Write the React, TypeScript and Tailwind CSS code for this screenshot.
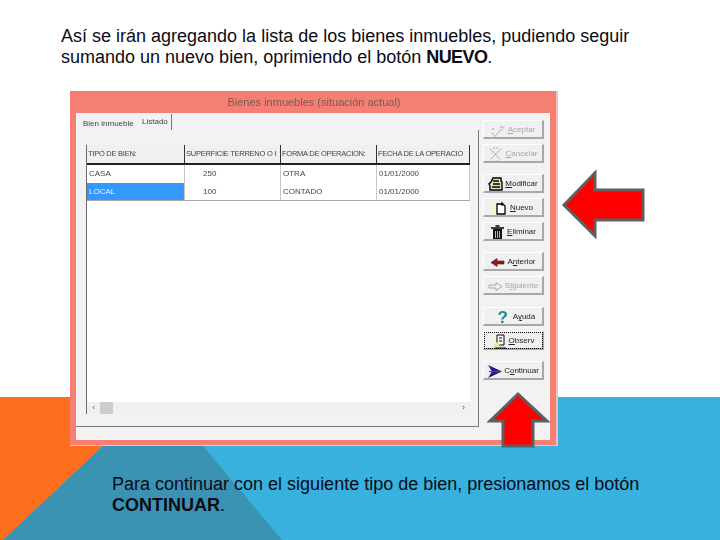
const F = "font-['Liberation_Sans',Arial,sans-serif]";

type Btn = { label: string; u: number; icon: React.ReactNode; off?: boolean; mt?: string; dotted?: boolean };

function Ic({ children }: { children: React.ReactNode }) {
  return <svg width="15" height="15" viewBox="0 0 15 15" className="shrink-0">{children}</svg>;
}

const buttons: Btn[] = [
  { label: "Aceptar", u: 0, off: true, icon: <Ic><path d="M1 10l3 3 2-2 8-8M9 4h2M1 6h2" fill="none" stroke="#b5b5b5" strokeWidth="1.3" strokeDasharray="2 1" /></Ic> },
  { label: "Cancelar", u: 0, off: true, icon: <Ic><path d="M2 2l11 11M13 2L2 13M5 1h5M5 14h5" fill="none" stroke="#b5b5b5" strokeWidth="1.2" strokeDasharray="2 1" /></Ic> },
  { label: "Modificar", u: 0, mt: "mt-[6px]", icon: <Ic><path d="M5 1h8v3l1 1v8H2V9L1 7l2-2z" fill="#e6e2b8" stroke="#000" strokeWidth="1.4" /><path d="M5 4h6M5 7h7M4 10h8" stroke="#000" strokeWidth="1.3" /></Ic> },
  { label: "Nuevo", u: 0, icon: <Ic><path d="M0 3h6v9H0z" fill="#f9f6b4" /><path d="M4 3h4l1 1V2l3 3v8H4z" fill="#fff" stroke="#000" strokeWidth="1.3" /></Ic> },
  { label: "Eliminar", u: 0, icon: <Ic><path d="M1 3h13M5.500 1h4" stroke="#000" strokeWidth="1.4" /><path d="M3 4h9v10H3z" fill="#111" /><path d="M5.500 6v7M7.500 6v7M9.500 6v7" stroke="#ddd" strokeWidth=".8" /></Ic> },
  { label: "Anterior", u: 1, mt: "mt-[6px]", icon: <Ic><path d="M1 7.500 7 3.500v2.500h7v3H7v2.500z" fill="#9c1420" stroke="#501018" strokeWidth=".6" /></Ic> },
  { label: "Siguiente", u: 1, off: true, icon: <Ic><path d="M14 7.500 8 3.500v2.500H1v3h7v2.500z" fill="none" stroke="#aaa" strokeWidth="1" /></Ic> },
  { label: "Ayuda", u: 1, mt: "mt-[7px]", icon: <span className="w-[20px] pl-[4px] text-center text-[17px] leading-[15px] font-bold text-[#178a9c]">?</span> },
  { label: "Observ", u: 0, dotted: true, icon: <Ic><path d="M5 1h7v10H5z" fill="#fff" stroke="#000" strokeWidth="1" /><path d="M0 13l5-5 3 2-2 3z" fill="#ecec80" /><path d="M7 4h3M7 7h3M3 14h11" stroke="#000" /></Ic> },
  { label: "Continuar", u: 1, mt: "mt-[6px]", icon: <Ic><path d="M1 1l14 6.500L1 14l4-6.500z" fill="#1a1a9c" /><path d="M2 7.500h12" stroke="#c02040" strokeWidth="1.400" /></Ic> },
];

function Button({ b }: { b: Btn }) {
  return (
    <div className={`${b.mt ?? ""} h-[19px] w-[61px] shrink-0 bg-[#f0f0f0] border-t border-l border-t-white border-l-white border-r-2 border-b-2 border-r-[#a8a8a8] border-b-[#a8a8a8] flex items-center justify-center gap-[2px] px-[1px] pt-[2px] text-[8px] leading-none whitespace-nowrap ${b.off ? "text-[#a6a6a6]" : "text-[#222]"} ${b.dotted ? "outline-1 outline-dotted outline-black -outline-offset-2" : ""}`}>
      {b.icon}
      <span>
        {b.label.slice(0, b.u)}
        <span className="underline">{b.label[b.u]}</span>
        {b.label.slice(b.u + 1)}
      </span>
    </div>
  );
}

const cols = ["w-[98px]", "w-[96px]", "w-[96px]", "flex-1"];
const header = ["TIPO DE BIEN:", "SUPERFICIE TERRENO O I", "FORMA DE OPERACION:", "FECHA DE LA OPERACIO"];
const rows = [
  ["CASA", "250", "OTRA", "01/01/2000"],
  ["LOCAL", "100", "CONTADO", "01/01/2000"],
];

function Grid() {
  return (
    <div className="w-[384px] h-[269px] flex flex-col bg-white border-l border-l-[#6a6a6a] text-[8px] leading-none text-[#444]">
      <div className="h-[20px] shrink-0 flex bg-[#f0f0f0] border-b-2 border-b-[#222] text-[7.500px] tracking-[-0.25px]">
        {header.map((h, i) => (
          <div key={h} className={`${cols[i]} border-r border-r-[#333] flex items-center pl-[1px] whitespace-nowrap`}>{h}</div>
        ))}
      </div>
      {rows.map((r, ri) => (
        <div key={ri} className={`h-[18px] shrink-0 flex ${ri === 1 ? "border-b border-b-[#a8a8a8]" : ""}`}>
          {r.map((c, i) => (
            <div key={i} className={`${cols[i]} flex items-center border-r border-r-[#c8c8c8] ${i === 1 ? "pl-[18px]" : "pl-[2px]"} ${ri === 1 && i === 0 ? "bg-[#3399ff] text-[#e8f2ff]" : ""}`}>{c}</div>
          ))}
        </div>
      ))}
      <div className="flex-1" />
      <div className="h-[12px] shrink-0 bg-[#f0f0f0] flex items-center text-[#444]">
        <span className="w-[13px] text-center text-[8px]">‹</span>
        <div className="w-[13px] h-full bg-[#cdcdcd]" />
        <div className="flex-1" />
        <span className="w-[13px] text-center text-[8px]">›</span>
      </div>
    </div>
  );
}

function Win() {
  return (
    <div className="ml-[70px] mt-[23px] w-[488px] h-[355px] bg-[#f47f72] border-r-2 border-b border-r-[#f4c0b8] border-b-[#f4c0b8] flex flex-col pb-[5px] px-[6px] blur-[0.3px]">
      <div className="h-[22px] shrink-0 flex items-center justify-center text-[11px] text-[#7a5a55] pl-[2px]">Bienes inmuebles (situación actual)</div>
      <div className="flex-1 bg-[#f2f2f2] flex flex-col">
        <div className="h-[17px] shrink-0 flex items-end text-[8px] leading-none text-[#444]">
          <div className="w-[60px] h-[12px] flex items-center pl-[7px] whitespace-nowrap">Bien inmueble</div>
          <div className="w-[36px] h-[16px] flex items-center pl-[6px] pb-[1px] border-r border-r-[#777]">Listado</div>
        </div>
        <div className="flex">
          <div className="w-[403px] h-[297px] shrink-0 border-r border-b border-r-[#777] border-b-[#777] pl-[10px] pt-[15px]">
            <Grid />
          </div>
          <div className="flex flex-col gap-[5px] pl-[4px] -mt-[10px]">
            {buttons.map((b) => <Button key={b.label} b={b} />)}
          </div>
        </div>
      </div>
    </div>
  );
}

export default function App() {
  return (
    <div className={`relative w-[720px] h-[540px] overflow-hidden bg-white text-[18px] leading-[21px] text-[#0b0b14] ${F}`}>
      <svg className="absolute inset-0" width="720" height="540" viewBox="0 0 720 540">
        <rect x="0" y="397" width="720" height="143" fill="#38b1df" />
        <polygon points="0,397 155,397 3,540 0,540" fill="#fd6f1c" />
        <polygon points="103,446 203,446 282,540 3,540" fill="#3b93b4" />
      </svg>
      <div className="relative flex flex-col">
        <p className="ml-[61px] mt-[26px] w-[620px]">
          Así se irán agregando la lista de los bienes inmuebles, pudiendo seguir<br />
          sumando un nuevo bien, oprimiendo el botón <b className="tracking-[-0.6px]">NUEVO</b>.
        </p>
        <Win />
        <p className="ml-[112px] mt-[28px] w-[560px]">
          Para continuar con el siguiente tipo de bien, presionamos el botón <b>CONTINUAR</b>.
        </p>
      </div>
      <svg className="absolute left-0 top-0" width="720" height="540" viewBox="0 0 720 540">
        <polygon points="564,205 595,173 595,190 643,190 643,220 595,220 595,236" fill="#ff0000" stroke="#5f5f5f" strokeWidth="3" />
        <polygon points="518,394 547,421 533,421 533,446 503,446 503,421 490,421" fill="#ff0000" stroke="#5f5f5f" strokeWidth="3" />
      </svg>
    </div>
  );
}
